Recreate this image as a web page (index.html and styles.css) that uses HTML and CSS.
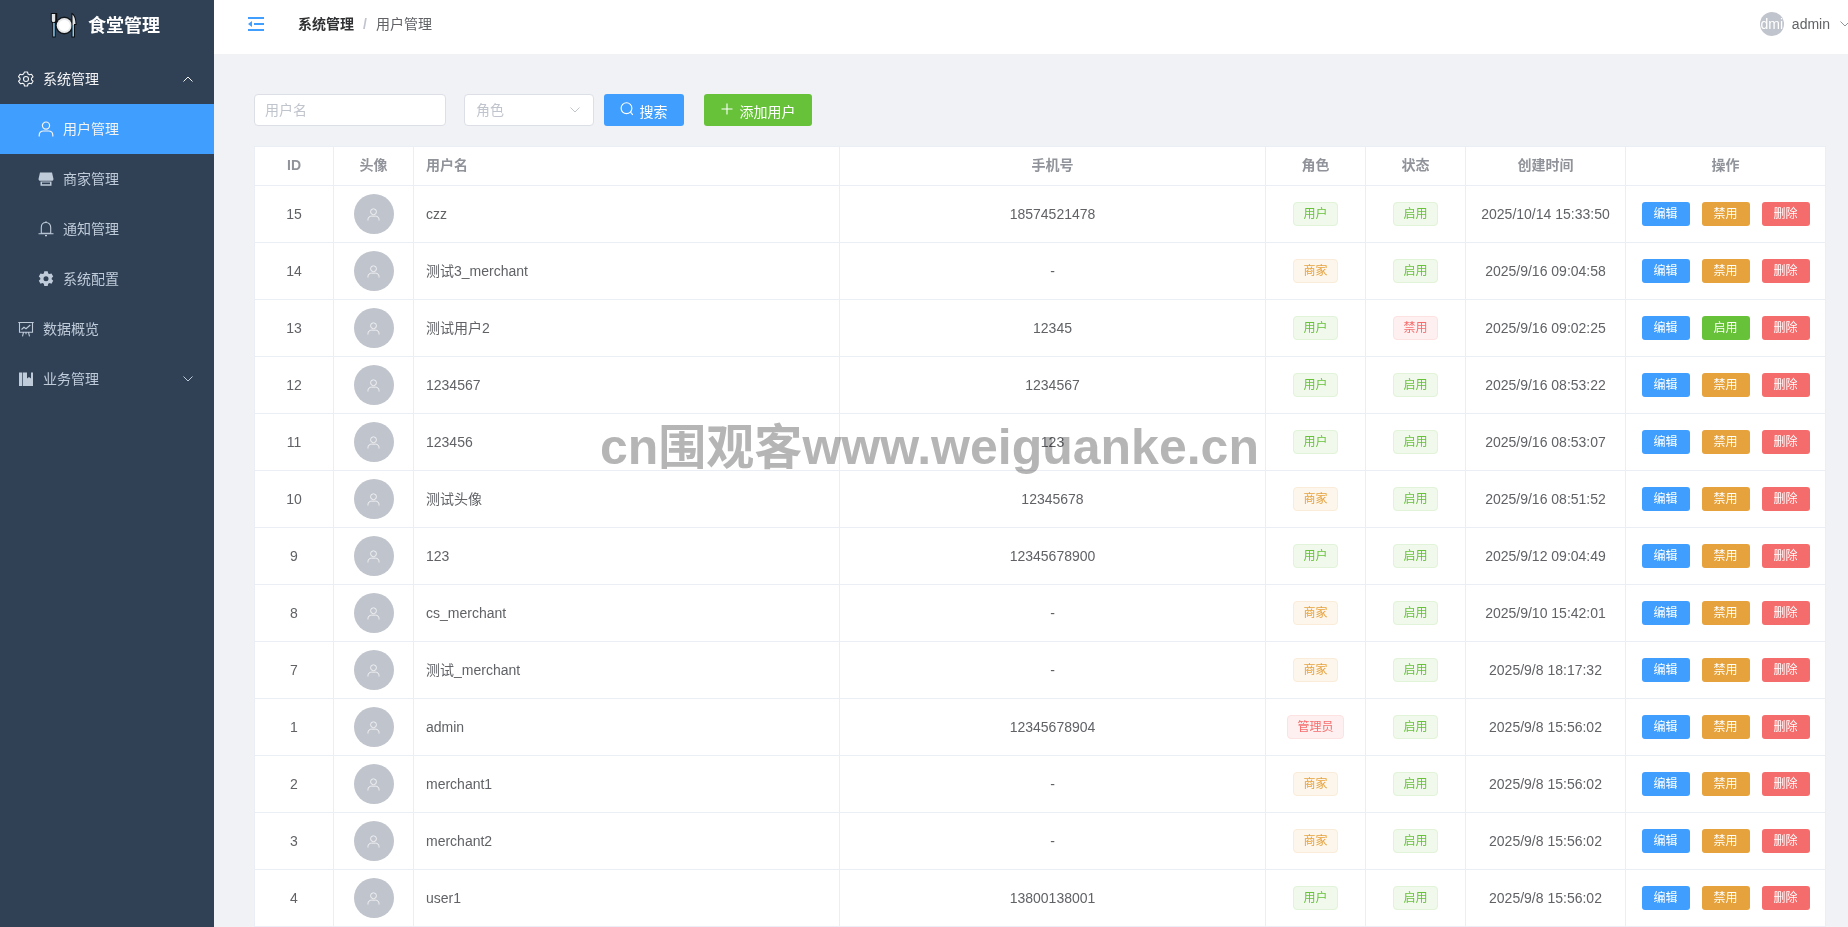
FILE: index.html
```html
<!DOCTYPE html>
<html lang="zh-CN">
<head>
  <meta charset="UTF-8" />
  <meta name="viewport" content="width=device-width, initial-scale=1.0"/>
  <title>用户管理</title>
  <link rel="stylesheet" href="styles.css">
</head>
<body>

  <svg class="icon-defs" width="0" height="0">
    <symbol id="i-user" viewBox="0 0 16 16">
      <circle cx="8" cy="4.600" r="3.600" fill="none" stroke="currentColor" stroke-width="1.200"/>
      <path d="M1.200 15.400v-1.200c0-2.600 2-4.200 4.400-4.200h4.800c2.400 0 4.400 1.600 4.400 4.200v1.200" fill="none" stroke="currentColor" stroke-width="1.200"/>
    </symbol>
    <symbol id="i-down" viewBox="0 0 10 6">
      <path d="M.5.5 5 5 9.500.5" fill="none" stroke="currentColor" stroke-width="1"/>
    </symbol>
    <symbol id="i-up" viewBox="0 0 10 6">
      <path d="M.5 5.500 5 1l4.500 4.500" fill="none" stroke="currentColor" stroke-width="1"/>
    </symbol>
  </svg>

  <!-- 侧边栏 -->
  <aside class="sidebar">
    <div class="logo">
      <svg class="logo-img" viewBox="0 0 27 26" width="27" height="26">
        <circle cx="14.300" cy="13.500" r="9" fill="#14181d"/>
        <circle cx="14.300" cy="13.500" r="7.600" fill="#e9ebec"/>
        <circle cx="14.300" cy="13.500" r="5.600" fill="#ffffff"/>
        <path d="M.8 1v7.500c0 1.200.8 2 1.600 2.400V25.500h3.200V11c.9-.5 1.600-1.300 1.600-2.500V1z" fill="#0b0e12"/>
        <path d="M1.800 2v6.400c0 1 .8 1.600 1.600 1.800h.2c.8-.2 1.600-.8 1.600-1.800V2z" fill="#dfe3e6"/>
        <rect x="3.200" y="11" width="1.500" height="13.500" fill="#8acbf2"/>
        <path d="M21.500 25.500V.8c3 1 5 5.200 5 12.200h-1.600v12.500z" fill="#0b0e12"/>
        <path d="M22.500 13V2.600c1.700 1.400 2.900 4.900 3 9.400h-1.500v1z" fill="#dfe3e6"/>
        <rect x="22.500" y="13" width="1.500" height="11.500" fill="#8acbf2"/>
      </svg>
      <span class="logo-title">食堂管理</span>
    </div>

    <nav class="menu">
      <div class="menu-item is-open">
        <svg class="menu-icon" viewBox="0 0 16 16">
          <path d="M6.500 1h3l.5 2 1.500.8 2-.6 1.500 2.600-1.500 1.400v1.600l1.500 1.400-1.500 2.600-2-.6-1.500.8-.5 2h-3l-.5-2-1.500-.8-2 .6L.5 10.200 2 8.800V7.200L.5 5.800 2 3.200l2 .6L5.500 3z" fill="none" stroke="currentColor" stroke-width="1.100" stroke-linejoin="round"/>
          <circle cx="8" cy="8" r="2.500" fill="none" stroke="currentColor" stroke-width="1.100"/>
        </svg>
        <span>系统管理</span>
        <svg class="menu-arrow"><use href="#i-up"/></svg>
      </div>
      <div class="menu-item sub active">
        <svg class="menu-icon"><use href="#i-user"/></svg>
        <span>用户管理</span>
      </div>
      <div class="menu-item sub">
        <svg class="menu-icon" viewBox="0 0 16 16">
          <path d="M2 1.500h12l1.500 6.500c0 1.300-1 1.800-1.800 1.800H2.300C1.500 9.800.5 9.300.5 8z" fill="currentColor"/>
          <path d="M2.500 10.500h11v4.200h-11zM4 11.500v1.800h8v-1.800z" fill="currentColor" fill-rule="evenodd"/>
        </svg>
        <span>商家管理</span>
      </div>
      <div class="menu-item sub">
        <svg class="menu-icon" viewBox="0 0 16 16">
          <path d="M8 1.500c-2.900 0-4.700 2.200-4.700 5v5.800h9.400V6.500c0-2.800-1.800-5-4.700-5z" fill="none" stroke="currentColor" stroke-width="1.100"/>
          <path d="M.5 12.800h15M8 .3v1.200M7 14.600h2" fill="none" stroke="currentColor" stroke-width="1.100"/>
        </svg>
        <span>通知管理</span>
      </div>
      <div class="menu-item sub">
        <svg class="menu-icon" viewBox="0 0 16 16">
          <path fill="currentColor" fill-rule="evenodd" d="M6.300.3h3.400l.5 2.100 1.300.7 2-.7 1.700 3-1.500 1.500v1.400l1.500 1.500-1.700 3-2-.7-1.300.7-.5 2.100H6.300l-.5-2.100-1.300-.7-2 .7-1.700-3L2.300 8.300V6.900L.8 5.400l1.700-3 2 .7 1.300-.7zM8 5.200a2.500 2.500 0 1 0 0 5 2.500 2.500 0 0 0 0-5z"/>
        </svg>
        <span>系统配置</span>
      </div>
      <div class="menu-item">
        <svg class="menu-icon" viewBox="0 0 16 16">
          <path d="M.3 1.500h15.400M1.500 1.500v9.800h13V1.500M5.500 11.300l-1 4M10.500 11.300l1 4M8 11.300v2" fill="none" stroke="currentColor" stroke-width="1.100"/>
          <path d="M3.500 8.500 6 6.300l2 1.400 4.300-3.700" fill="none" stroke="currentColor" stroke-width="1.100"/>
        </svg>
        <span>数据概览</span>
      </div>
      <div class="menu-item">
        <svg class="menu-icon" viewBox="0 0 16 16">
          <path fill="currentColor" d="M1 1.500h3.300v13.500H1zM5 1.500h4v6l2-1.600 2 1.600v-6h2v13.500H5z"/>
        </svg>
        <span>业务管理</span>
        <svg class="menu-arrow"><use href="#i-down"/></svg>
      </div>
    </nav>
  </aside>

  <div class="main">
    <!-- 顶部栏 -->
    <header class="navbar">
      <svg class="fold-icon" viewBox="0 0 16 14" width="16" height="14">
        <path fill="#409eff" d="M0 0h16v2H0zM6 6h10v2H6zM0 12h16v2H0zM4 4v6L0 7z"/>
      </svg>
      <div class="breadcrumb">
        <b>系统管理</b><i>/</i><span>用户管理</span>
      </div>
      <div class="user-box">
        <div class="user-avatar"><span>admin</span></div>
        <span class="user-name">admin</span>
        <svg class="user-arrow"><use href="#i-down"/></svg>
      </div>
    </header>

    <section class="content">
      <div class="toolbar">
        <input type="text" class="input-field" placeholder="用户名" />
        <div class="select-field">
          <span>角色</span>
          <svg class="select-arrow"><use href="#i-down"/></svg>
        </div>
        <button class="btn btn-blue">
          <svg class="btn-icon" viewBox="0 0 14 14">
            <circle cx="6.500" cy="6.200" r="5.400" fill="none" stroke="currentColor" stroke-width="1.100"/>
            <path d="M10.500 10.200l2.300 2.600" fill="none" stroke="currentColor" stroke-width="1.100"/>
          </svg>
          搜索
        </button>
        <button class="btn btn-green">
          <svg class="btn-icon" viewBox="0 0 14 14">
            <path d="M7 1.500v11M1.500 7h11" fill="none" stroke="currentColor" stroke-width="1.100"/>
          </svg>
          添加用户
        </button>
      </div>

      <table class="user-table">
        <colgroup>
          <col class="c-id"><col class="c-avatar"><col class="c-name"><col class="c-phone">
          <col class="c-role"><col class="c-status"><col class="c-time"><col class="c-ops">
        </colgroup>
        <thead>
          <tr>
            <th>ID</th><th>头像</th><th class="left">用户名</th><th>手机号</th>
            <th>角色</th><th>状态</th><th>创建时间</th><th>操作</th>
          </tr>
        </thead>
        <tbody id="rows"></tbody>
      </table>
    </section>
  </div>

  <div class="watermark">cn<span>围观客</span>www.weiguanke.cn</div>

  <script>
    const users = [
      [15, "czz", "18574521478", "user", 1, "2025/10/14 15:33:50"],
      [14, "测试3_merchant", "-", "merchant", 1, "2025/9/16 09:04:58"],
      [13, "测试用户2", "12345", "user", 0, "2025/9/16 09:02:25"],
      [12, "1234567", "1234567", "user", 1, "2025/9/16 08:53:22"],
      [11, "123456", "123", "user", 1, "2025/9/16 08:53:07"],
      [10, "测试头像", "12345678", "merchant", 1, "2025/9/16 08:51:52"],
      [9, "123", "12345678900", "user", 1, "2025/9/12 09:04:49"],
      [8, "cs_merchant", "-", "merchant", 1, "2025/9/10 15:42:01"],
      [7, "测试_merchant", "-", "merchant", 1, "2025/9/8 18:17:32"],
      [1, "admin", "12345678904", "admin", 1, "2025/9/8 15:56:02"],
      [2, "merchant1", "-", "merchant", 1, "2025/9/8 15:56:02"],
      [3, "merchant2", "-", "merchant", 1, "2025/9/8 15:56:02"],
      [4, "user1", "13800138001", "user", 1, "2025/9/8 15:56:02"]
    ];
    const roles = {
      user: ["用户", "tag-green"],
      merchant: ["商家", "tag-orange"],
      admin: ["管理员", "tag-red"]
    };

    document.getElementById("rows").innerHTML = users.map(function (u) {
      const role = roles[u[3]];
      const on = u[4] === 1;
      return "<tr>" +
        "<td>" + u[0] + "</td>" +
        '<td><div class="avatar"><svg class="avatar-icon"><use href="#i-user"/></svg></div></td>' +
        '<td class="left">' + u[1] + "</td>" +
        "<td>" + u[2] + "</td>" +
        '<td><span class="tag ' + role[1] + '">' + role[0] + "</span></td>" +
        '<td><span class="tag ' + (on ? "tag-green" : "tag-red") + '">' + (on ? "启用" : "禁用") + "</span></td>" +
        "<td>" + u[5] + "</td>" +
        '<td><div class="actions">' +
          '<button class="mini mini-blue">编辑</button>' +
          '<button class="mini ' + (on ? "mini-orange" : "mini-green") + '">' + (on ? "禁用" : "启用") + "</button>" +
          '<button class="mini mini-red">删除</button>' +
        "</div></td>" +
        "</tr>";
    }).join("");
  </script>

</body>
</html>
```

FILE: styles.css
```css
* {
  box-sizing: border-box;
}

body, html {
  height: 100%;
  margin: 0;
  font-family: "Liberation Sans", "Noto Sans CJK SC", sans-serif;
  font-size: 14px;
  color: #606266;
  overflow: hidden;
}

body {
  display: flex;
  background-color: #f0f2f5;
}

.icon-defs {
  position: absolute;
}

/* sidebar */
.sidebar {
  width: 214px;
  flex-shrink: 0;
  height: 100%;
  background-color: #304156;
  color: #bfcbd9;
}

.logo {
  height: 54px;
  padding: 12px 0 0 50px;
  display: flex;
  align-items: flex-start;
  gap: 11px;
}

.logo-title {
  font-size: 18px;
  font-weight: bold;
  color: white;
  line-height: 28px;
}

.menu-item {
  height: 50px;
  padding: 0 21px 0 18px;
  display: flex;
  align-items: center;
}

.menu-item span {
  line-height: 16px;
}

.menu-item.sub {
  padding-left: 38px;
}

.menu-item.is-open {
  color: #f4f4f5;
}

.menu-item.active {
  background-color: #409eff;
  color: #f4f4f5;
}

.menu-icon {
  width: 16px;
  height: 16px;
  margin-right: 9px;
  flex-shrink: 0;
}

.menu-arrow {
  width: 10px;
  height: 6px;
  margin-left: auto;
}

/* top bar */
.main {
  flex: 1;
  min-width: 0;
  display: flex;
  flex-direction: column;
}

.navbar {
  height: 54px;
  flex-shrink: 0;
  padding: 0 0 6px 34px;
  background-color: white;
  display: flex;
  align-items: center;
  overflow: hidden;
}

.fold-icon {
  flex-shrink: 0;
}

.breadcrumb {
  margin-left: 34px;
  line-height: 16px;
  display: flex;
  align-items: center;
}

.breadcrumb b {
  color: #303133;
}

.breadcrumb i {
  margin: 0 9px;
  font-style: normal;
  font-weight: bold;
  color: #c0c4cc;
}

.user-box {
  margin-left: auto;
  margin-right: -2px;
  display: flex;
  align-items: center;
}

.user-avatar {
  width: 24px;
  height: 24px;
  border-radius: 50%;
  background-color: #c0c4cc;
  color: white;
  display: flex;
  justify-content: center;
  align-items: center;
  overflow: hidden;
}

.user-name {
  margin-left: 8px;
}

.user-arrow {
  width: 10px;
  height: 6px;
  margin-left: 10px;
  color: #909399;
}

/* page content */
.content {
  padding: 40px 22px 0 40px;
}

.toolbar {
  display: flex;
  align-items: center;
  margin-bottom: 20px;
}

.input-field {
  width: 192px;
  height: 32px;
  padding: 0 10px;
  border: 1px solid #dcdfe6;
  border-radius: 4px;
  background-color: white;
  font: inherit;
  color: #606266;
}

.input-field::placeholder {
  color: #c0c4cc;
}

.select-field {
  width: 130px;
  height: 32px;
  margin-left: 18px;
  padding: 0 13px 0 11px;
  border: 1px solid #dcdfe6;
  border-radius: 4px;
  background-color: white;
  color: #c0c4cc;
  display: flex;
  align-items: center;
}

.select-field span {
  line-height: 16px;
}

.select-arrow {
  width: 10px;
  height: 6px;
  margin-left: auto;
}

.btn {
  height: 32px;
  margin-left: 10px;
  padding: 2px 1px 0 0;
  border: none;
  border-radius: 3px;
  color: white;
  font: inherit;
  display: flex;
  align-items: center;
  justify-content: center;
  gap: 6px;
}

.btn-icon {
  width: 14px;
  height: 14px;
  margin-top: -4px;
}

.btn-blue {
  width: 80px;
  background-color: #409eff;
}

.btn-green {
  width: 108px;
  margin-left: 20px;
  background-color: #67c23a;
}

/* table */
.user-table {
  width: 1572px;
  table-layout: fixed;
  border-collapse: separate;
  border-spacing: 0;
  border-top: 1px solid #ebeef5;
  border-left: 1px solid #ebeef5;
  background-color: white;
  line-height: 16px;
}

.c-id { width: 79px; }
.c-avatar { width: 80px; }
.c-name { width: 426px; }
.c-phone { width: 426px; }
.c-role { width: 100px; }
.c-status { width: 100px; }
.c-time { width: 160px; }
.c-ops { width: 200px; }

.user-table th,
.user-table td {
  padding: 0 12px;
  text-align: center;
  border-right: 1px solid #ebeef5;
  border-bottom: 1px solid #ebeef5;
  white-space: nowrap;
}

.user-table th {
  height: 39px;
  padding-bottom: 2px;
  color: #909399;
  font-weight: bold;
}

.user-table td {
  height: 57px;
}

.user-table .left {
  text-align: left;
}

.avatar {
  width: 40px;
  height: 40px;
  margin: 0 auto;
  border-radius: 50%;
  background-color: #c0c4cc;
  color: #f1f2f4;
  display: flex;
  justify-content: center;
  align-items: center;
}

.avatar-icon {
  width: 13px;
  height: 13px;
}

.tag {
  display: inline-block;
  height: 24px;
  padding: 0 9px;
  border: 1px solid;
  border-radius: 4px;
  font-size: 12px;
  line-height: 22px;
  vertical-align: middle;
}

.tag-green {
  background-color: #f0f9eb;
  border-color: #e1f3d8;
  color: #67c23a;
}

.tag-orange {
  background-color: #fdf6ec;
  border-color: #faecd8;
  color: #e6a23c;
}

.tag-red {
  background-color: #fef0f0;
  border-color: #fde2e2;
  color: #f56c6c;
}

.actions {
  display: flex;
  justify-content: center;
  gap: 12px;
}

.mini {
  width: 48px;
  height: 24px;
  padding: 0;
  border: none;
  border-radius: 3px;
  color: white;
  font: inherit;
  font-size: 12px;
}

.mini-blue { background-color: #409eff; }
.mini-orange { background-color: #e6a23c; }
.mini-green { background-color: #67c23a; }
.mini-red { background-color: #f56c6c; }

/* site watermark over the page */
.watermark {
  position: absolute;
  left: 600px;
  top: 417px;
  font-size: 50px;
  font-weight: bold;
  line-height: 60px;
  color: #b5b5b5;
  white-space: nowrap;
  mix-blend-mode: multiply;
}

.watermark span {
  font-size: 48px;
}
```
